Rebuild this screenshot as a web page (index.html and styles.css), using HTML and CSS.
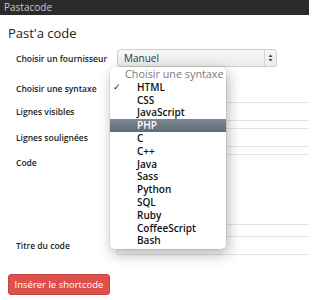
FILE: index.html
```html
<!DOCTYPE html>
<html lang="fr">
<head>
<meta charset="utf-8">
<title>Pastacode</title>
<link rel="stylesheet" href="styles.css">
</head>
<body>
<div class="bar">Pastacode</div>
<main class="content">
  <h1 class="title">Past'a code</h1>
  <div class="form">
    <div class="row row-provider">
      <label class="label">Choisir un fournisseur</label>
      <div class="select select-wide">
        <span class="select-text">Manuel</span>
        <span class="select-arrow"><svg width="5" height="8" viewBox="0 0 5 8"><path d="M2.5 0.5 L4.5 3 L0.5 3 Z M2.5 7.5 L4.5 5 L0.5 5 Z" fill="#444"/></svg></span>
      </div>
    </div>
    <div class="row row-syntax">
      <label class="label">Choisir une syntaxe</label>
      <div class="select select-small">
        <span class="select-text"></span>
        <span class="select-arrow"></span>
      </div>
    </div>
    <div class="row row-visible">
      <label class="label">Lignes visibles</label>
      <div class="input"></div>
    </div>
    <div class="row row-under">
      <label class="label">Lignes soulignées</label>
      <div class="input"></div>
    </div>
    <div class="row row-code">
      <label class="label label-top">Code</label>
      <div class="input textarea"></div>
    </div>
    <div class="row row-titre">
      <label class="label">Titre du code</label>
      <div class="input"></div>
    </div>
  </div>
  <button class="btn">Insérer le shortcode</button>
</main>
<div class="menu">
  <div class="menu-head">Choisir une syntaxe</div>
  <div class="menu-item checked"><span class="check">✓</span>HTML</div>
  <div class="menu-item">CSS</div>
  <div class="menu-item">JavaScript</div>
  <div class="menu-item active">PHP</div>
  <div class="menu-item">C</div>
  <div class="menu-item">C++</div>
  <div class="menu-item">Java</div>
  <div class="menu-item">Sass</div>
  <div class="menu-item">Python</div>
  <div class="menu-item">SQL</div>
  <div class="menu-item">Ruby</div>
  <div class="menu-item">CoffeeScript</div>
  <div class="menu-item">Bash</div>
</div>
</body>
</html>
```
FILE: styles.css
```css
html, body {
  margin: 0;
  padding: 0;
  background: #fff;
  overflow: hidden;
  width: 309px;
  height: 300px;
}
body {
  font-family: "Open Sans", "Liberation Sans", sans-serif;
  color: #222;
  position: relative;
}
.bar {
  height: 15px;
  background: #2b2b2b;
  color: #c8c8c8;
  font-size: 10px;
  line-height: 15px;
  padding-left: 4px;
}
.content {
  padding: 0 0 0 8px;
}
.title {
  margin: 10px 0 0;
  font-size: 13px;
  font-weight: 400;
  line-height: 17px;
  color: #222;
}
.form {
  display: flex;
  flex-direction: column;
  margin-top: 7px;
  padding-left: 8px;
}
.row {
  display: flex;
  align-items: center;
}
.label {
  width: 101px;
  flex: none;
  font-size: 8.5px;
  font-weight: 600;
  color: #222;
}
.label-top {
  align-self: flex-start;
  padding-top: 3px;
}
.row-code { align-items: flex-start; }
.select {
  box-sizing: border-box;
  height: 18px;
  border: 1px solid #d0d0d0;
  border-radius: 3px;
  background: linear-gradient(#f7f7f7, #ebebeb);
  display: flex;
  align-items: center;
  position: relative;
  flex: none;
}
.select-wide { width: 160px; }
.select-small { width: 92px; height: 17px; }
.select-text {
  flex: 1;
  padding-left: 6px;
  font-size: 10px;
  color: #333;
}
.select-arrow {
  width: 11px;
  align-self: stretch;
  border-left: 1px solid #d6d6d6;
  display: flex;
  align-items: center;
  justify-content: center;
}
.row-syntax { margin-top: 13px; }
.input {
  box-sizing: border-box;
  flex: 1;
  min-width: 0;
  height: 19px;
  border: 1px solid #e4e4e4;
  border-right: none;
  border-radius: 2px 0 0 2px;
  background: #fff;
}
.row-visible { margin-top: 5px; }
.row-under { margin-top: 7px; }
.row-code { margin-top: 7px; }
.textarea { height: 71px; }
.row-titre { margin-top: 11px; }
.btn {
  margin-top: 19px;
  width: 102px;
  height: 21px;
  background: #df4f4b;
  border: 1px solid #c8423e;
  border-radius: 3px;
  color: #fff;
  font-family: "Open Sans", "Liberation Sans", sans-serif;
  font-size: 9.5px;
  padding: 0;
  display: block;
}
.menu {
  position: absolute;
  left: 110px;
  top: 67px;
  width: 116px;
  box-sizing: border-box;
  padding: 1px 0 2px;
  background: rgba(255, 255, 255, 0.95);
  border-radius: 5px;
  box-shadow: 2px 5px 14px rgba(0, 0, 0, 0.3), 0 0 0 0.5px rgba(0, 0, 0, 0.12);
  font-family: "Open Sans", "Liberation Sans", sans-serif;
}
.menu-head {
  height: 12.8px;
  line-height: 12.8px;
  padding-left: 15px;
  font-size: 10.8px;
  color: #7a7a7a;
}
.menu-item {
  position: relative;
  height: 12.8px;
  line-height: 12.8px;
  padding-left: 27px;
  font-size: 10px;
  font-weight: 600;
  color: #111;
}
.menu-item.active {
  background: linear-gradient(#7c8894, #5f6b77);
  color: #fff;
}
.check {
  position: absolute;
  left: 3px;
  top: 0;
  font-size: 9px;
  font-family: "DejaVu Sans", sans-serif;
}
```
